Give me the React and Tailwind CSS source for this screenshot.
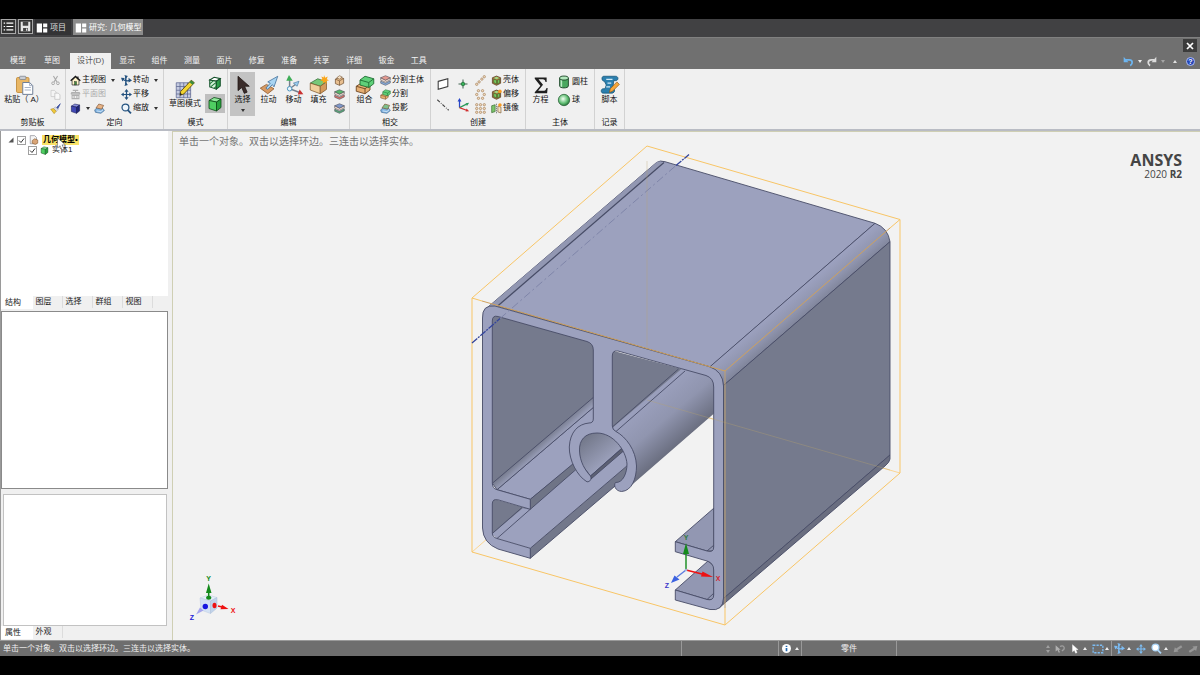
import React from "react";

// =====================================================
// Static data
// =====================================================
const leadTabs = ["模型", "草图"];
const ribbonTabs = ["显示", "组件", "测量", "面片", "修复", "准备", "共享", "详细", "钣金", "工具"];
const treeTabs = ["结构", "图层", "选择", "群组", "视图"];
const propTabs = ["属性", "外观"];

// =====================================================
// Icons (all on a 16 x 16 grid)
// =====================================================
function Svg({ className = "w-[11px] h-[11px]", children }) {
  return (
    <svg viewBox="0 0 16 16" className={`${className} shrink-0`} fill="none" aria-hidden="true">
      {children}
    </svg>
  );
}

function Caret({ up = false, className = "text-[#333]" }) {
  return (
    <svg viewBox="0 0 4 3" className={`w-1 h-[3px] shrink-0 ${className}`} aria-hidden="true">
      <path d={up ? "M0 3 2 0 4 3z" : "M0 0h4L2 3z"} fill="currentColor" />
    </svg>
  );
}

function Cube({ className, top = "#8ee89a", left = "#27a23c", right = "#4fce62", line = "#0c4a17" }) {
  return (
    <Svg className={className}>
      <g stroke={line} strokeWidth=".8" strokeLinejoin="round">
        <path d="M2 4.500 7 1.500 14 3 9.500 6z" fill={top} />
        <path d="M2 4.500 9.500 6v9L2 12.500z" fill={right} />
        <path d="M9.500 6 14 3v8.500L9.500 15z" fill={left} />
      </g>
    </Svg>
  );
}

function PasteIcon() {
  return (
    <Svg className="w-5 h-5">
      <rect x="2" y="2" width="10" height="12" rx="1" fill="#e9b765" stroke="#c08a3a" strokeWidth=".7" />
      <rect x="4.500" y="1" width="5" height="2.600" rx=".6" fill="#c9cdd4" stroke="#7b818c" strokeWidth=".6" />
      <path d="M7 6h5.500L15 8.500V15.500H7z" fill="#fff" stroke="#6f7f96" strokeWidth=".8" />
      <path d="M12.500 6v2.500H15M8.500 10h5M8.500 12h5" stroke="#9aa7bb" strokeWidth=".7" />
    </Svg>
  );
}

function ScissorsIcon() {
  return (
    <Svg>
      <path d="M5 1.500 10 10M11 1.500 6 10" stroke="#a8a8a8" strokeWidth="1.500" />
      <circle cx="4.500" cy="12" r="2" stroke="#a8a8a8" strokeWidth="1.400" />
      <circle cx="11.500" cy="12" r="2" stroke="#a8a8a8" strokeWidth="1.400" />
    </Svg>
  );
}

function CopyIcon() {
  return (
    <Svg>
      <path d="M1.500 2h5L9 4.500V11H1.500z" fill="#f4f4f4" stroke="#c4c4c4" />
      <path d="M7 6h5l2.500 2.500V15H7z" fill="#f8f8f8" stroke="#bcbcbc" />
    </Svg>
  );
}

function BrushIcon() {
  return (
    <Svg>
      <path d="M15 1 9 7l2 2z" fill="#3b4fa0" stroke="#3b4fa0" />
      <path d="M8 5.500 12 9.500 9 12 5 8z" fill="#d8dbe2" stroke="#8d93a0" strokeWidth=".6" />
      <path d="M5 8 9 12 6 15.500 1 9z" fill="#f0c93a" stroke="#a07b16" strokeWidth=".7" />
    </Svg>
  );
}

function HomeIcon() {
  return (
    <Svg>
      <path d="M3 8v6.500h10V8L8 3z" fill="#fff3c9" stroke="#222" />
      <path d="M1 8.500 8 2l7 6.500" stroke="#111" strokeWidth="1.900" />
      <rect x="6.500" y="9.500" width="3" height="5" fill="#3f8a3d" stroke="#222" strokeWidth=".6" />
      <path d="M11.500 2v3" stroke="#111" strokeWidth="1.700" />
    </Svg>
  );
}

function PlanViewIcon() {
  return (
    <Svg>
      <path d="M1 7h14M8 1v4M4 2h8M2.500 5h11v2.500h-11zM3 9.500h10V14H3zM6 9.500V14M10 9.500V14" stroke="#b0b0b0" strokeWidth="1.500" />
    </Svg>
  );
}

function StackIcon({ a = "#e7b487", b = "#7fb4e2" }) {
  return (
    <Svg>
      <path d="M1 10 5 6.500 13 8 15 11 10 15 2 13.500z" fill={b} stroke="#365d86" strokeWidth=".9" />
      <path d="M3 7 7 1.500 14 3.500 11 9z" fill={a} stroke="#7a4d2a" strokeWidth=".9" />
      <path d="M4 11.500 10 12.500 13.500 9.500" stroke="#fff" strokeWidth=".9" />
    </Svg>
  );
}

function SpinIcon({ color = "#24527f", className }) {
  return (
    <Svg className={className}>
      <path d="M7 3v10M2.500 6c3 3 8 3 10.500 1.500" stroke={color} strokeWidth="2" />
      <path d="M5 0 10 1.500 7 5.500zM5 16l5-1.500-3-4zM0 4l5.500.5L2 9.500zM16 8l-5-4v7z" fill={color} />
    </Svg>
  );
}

function PanIcon({ color = "#24527f", className }) {
  return (
    <Svg className={className}>
      <path d="M8 2v12M2 8h12" stroke={color} strokeWidth="1.800" />
      <path d="M8 0 11 4H5zM8 16l3-4H5zM0 8l4-3v6zM16 8l-4-3v6z" fill={color} />
    </Svg>
  );
}

function ZoomIcon({ color = "#24527f", fill = "#eef5fb", className }) {
  return (
    <Svg className={className}>
      <circle cx="6.500" cy="6.500" r="5" fill={fill} stroke={color} strokeWidth="1.800" />
      <path d="M10 10.500 14.500 15" stroke={color} strokeWidth="2.600" />
    </Svg>
  );
}

function SketchIcon() {
  return (
    <Svg className="w-5 h-5">
      <rect x="1" y="3" width="11.500" height="12" fill="#c4cae0" />
      <path d="M1 3v12h11.500V3zM4 3v12M7 3v12M10 3v12M1 6h11.500M1 9h11.500M1 12h11.500" stroke="#5c6690" strokeWidth=".6" />
      <path d="M13 1 15.500 3 7 12 4 13 4.500 10z" fill="#f3d531" stroke="#5e4c0b" strokeWidth=".7" />
      <path d="M13 1 15.500 3 14 4.600 11.500 2.600z" fill="#3c8b3f" />
      <path d="M4 13 4.300 11 5.800 12.300z" fill="#222" />
    </Svg>
  );
}

function SectionIcon() {
  return (
    <Svg className="w-[14px] h-[14px]">
      <path d="M2 4.500 7 1.500 14 3 9.500 6z" fill="#fff" stroke="#14502a" strokeWidth="1.200" />
      <path d="M2 4.500 9.500 6v9L2 12.500z" fill="#d4f2da" stroke="#14502a" strokeWidth="1.200" />
      <path d="M9.500 6 14 3v8.500L9.500 15z" fill="#2da04a" stroke="#14502a" strokeWidth="1.200" />
      <path d="M2 9 6 5.500M3 12.500 9 7.500M7 14l2.500-2" stroke="#1f7a38" strokeWidth="1.200" />
    </Svg>
  );
}

function ArrowCursor({ className = "w-5 h-5", fill = "#3a2c2a", line = "#1d1412" }) {
  return (
    <Svg className={className}>
      <path d="M4 1v11.500l3-2.500 2 4.700 2.300-1L9.300 9H13z" fill={fill} stroke={line} strokeWidth=".6" />
    </Svg>
  );
}

function PullIcon() {
  return (
    <Svg className="w-5 h-5">
      <path d="M1 10.500 6 7.500 12 11 7 15z" fill="#d79a63" stroke="#8a5426" strokeWidth=".6" />
      <path d="M15 1 7 5.500 9 6.500 5.500 10.500 7 11.500 10.700 7.700 12 9.500z" fill="#a8d4f2" stroke="#3c6b97" strokeWidth=".6" />
    </Svg>
  );
}

function MoveIcon() {
  return (
    <Svg className="w-5 h-5">
      <path d="M4.500 3v8l8 3M4.500 11 10 7" stroke="#76808e" strokeWidth="1.200" />
      <path d="M4 0 7 4.500 1.800 4.500z" fill="#3fae58" />
      <path d="M15.500 15.300 11 15.500l1.500-4z" fill="#c93030" />
      <path d="M12 5 10.500 9 7.500 6.500z" fill="#9ccdf0" stroke="#47759c" strokeWidth=".5" />
      <circle cx="4.500" cy="11" r="1.800" fill="#e8f4fb" stroke="#4b95bf" strokeWidth=".8" />
    </Svg>
  );
}

function FillIcon() {
  return (
    <Svg className="w-5 h-5">
      <path d="M1 6.500 7 3 14 5.500 9 9z" fill="#78c878" stroke="#2f6b33" strokeWidth=".6" />
      <path d="M1 6.500 9 9v6L1 12z" fill="#f1cf9c" stroke="#80592c" strokeWidth=".6" />
      <path d="M9 9 14 5.500V11.500L9 15z" fill="#d59a5b" stroke="#80592c" strokeWidth=".6" />
      <path d="M12 0l.9 2.200L15 1.200l-.8 2.100 1.800.9-2.100.6.5 2.200L12.500 5.500l-1.600 1.200.2-2-2.100-.4L10.700 3 9.800 1.200l2 .7z" fill="#f9a51a" />
    </Svg>
  );
}

function BlocksIcon({ className = "w-5 h-5" }) {
  return (
    <Svg className={className}>
      <path d="M1 9 5 6.500 12 8v4L8 15 1 13z" fill="#e5ae72" stroke="#6b431f" strokeWidth=".7" />
      <path d="M4 4 8 1l7 2v4l-4 3-7-2z" fill="#5fd079" stroke="#1b6a30" strokeWidth=".7" />
      <path d="M4 4 11 6 15 3M11 6v4" stroke="#1b6a30" strokeWidth=".7" />
      <path d="M1 9 8 11v4M8 11l2-1.500" stroke="#6b431f" strokeWidth=".7" />
    </Svg>
  );
}

function BrownBox({ face = "#e8bf90", accent = "#f6e3c9" }) {
  return (
    <Svg>
      <path d="M2 6 8 3 14 5v7L8 15 2 12.500z" fill={face} stroke="#6c4a2a" />
      <path d="M2 6 8 8.500 14 5M8 8.500V15" stroke="#6c4a2a" strokeWidth=".9" />
      <path d="M4 4 8 1l4 2-4 3z" fill={accent} stroke="#6c4a2a" strokeWidth=".8" />
    </Svg>
  );
}

function LayersIcon({ top, bottom }) {
  return (
    <Svg>
      <path d="M1 9v3l7 3 7-3.500v-3L8 12z" fill={bottom} stroke="#4a4a55" strokeWidth=".8" />
      <path d="M1 4v3.500L8 10.500 15 7V4L8 7.500z" fill="#f6ded0" stroke="#4a4a55" strokeWidth=".8" />
      <path d="M1 4 8 1l7 3-7 3.500z" fill={top} stroke="#4a4a55" strokeWidth=".8" />
    </Svg>
  );
}

function PlaneIcon() {
  return (
    <Svg className="w-[14px] h-[14px]">
      <path d="M2.500 5 13.500 2v9L2.500 14z" fill="#fff" stroke="#3c3c3c" strokeWidth="1.200" />
    </Svg>
  );
}

function AxisLineIcon() {
  return (
    <Svg className="w-[14px] h-[14px]">
      <path d="M1.500 2 14.500 14" stroke="#444" strokeWidth="1.200" strokeDasharray="4 1.500 1 1.500" />
    </Svg>
  );
}

function PointIcon() {
  return (
    <Svg className="w-3 h-3">
      <path d="M8 2v12M2 8h12" stroke="#3d5f4c" strokeWidth="1.300" />
      <circle cx="8" cy="8" r="2.400" fill="#37b45a" stroke="#1d6b34" />
    </Svg>
  );
}

function OriginIcon() {
  return (
    <Svg className="w-[14px] h-[14px]">
      <path d="M4 11V3" stroke="#2846c8" strokeWidth="1.400" />
      <path d="M4 0 6.200 4H1.800z" fill="#2846c8" />
      <path d="M4 11 12 7" stroke="#2a9a5a" strokeWidth="1.400" />
      <path d="M15 5.500 12.500 9 11 6z" fill="#2a9a5a" />
      <path d="M4 11 12 14" stroke="#d02f2f" strokeWidth="1.400" />
      <path d="M15 15 11 15.500 12 12z" fill="#d02f2f" />
    </Svg>
  );
}

function DotsIcon({ points }) {
  return (
    <Svg>
      {points.map(([cx, cy]) => (
        <circle key={`${cx}-${cy}`} cx={cx} cy={cy} r="1.700" fill="#f3dcc0" stroke="#a5825c" />
      ))}
    </Svg>
  );
}

const linearDots = [[2.5, 13.5], [6, 10], [10, 6], [13.5, 2.5]];
const circularDots = [[5, 2.5], [11, 2.5], [2.5, 8], [13.5, 8], [5, 13.5], [11, 13.5]];
const gridDots = [[2.5, 2.5], [8, 2.5], [13.5, 2.5], [2.5, 8], [8, 8], [13.5, 8], [2.5, 13.5], [8, 13.5], [13.5, 13.5]];

function ShellIcon({ spark }) {
  return (
    <Svg>
      <path d="M2 4 8 1.500 14 4v8L8 15 2 12z" fill="#a8743c" stroke="#4c3517" />
      <path d="M4 6 8 7.500V13L4 11zM9.500 7.500 12.500 6v5l-3 2z" fill="#77c760" stroke="#2c5a20" strokeWidth=".7" />
      <path d="M4 4.300 8 2.700 12 4.300 8 6z" fill="#9fdc86" />
      {spark && <circle cx="13" cy="3.500" r="2.600" fill="#f79a22" />}
    </Svg>
  );
}

function MirrorIcon() {
  return (
    <Svg>
      <path d="M1 4 6 2.500v10L1 14z" fill="#7cc76b" stroke="#3b6a32" />
      <path d="M8 1v14" stroke="#555" strokeDasharray="2 1" />
      <path d="M10 4.500 14.500 6v8.500L10 13z" fill="#f3e2c6" stroke="#81653f" />
      <circle cx="13" cy="3" r="2.600" fill="#f79a22" />
    </Svg>
  );
}

function SigmaIcon() {
  return (
    <Svg className="w-5 h-5">
      <path d="M3 2h9.500v3.500h-.9C11.400 4 10.800 3.300 9.500 3.300H6l3.600 4.500L5.700 12.600h4c1.500 0 2.300-.7 2.700-2.300h.9L12.900 14.500H3v-.8L7.500 8.500 3 3z" fill="#1f1f1f" />
    </Svg>
  );
}

function CylinderIcon() {
  return (
    <Svg className="w-[14px] h-[14px]">
      <path d="M3 3.500v9c0 3 10 3 10 0v-9" fill="#4aa860" stroke="#173f22" />
      <path d="M5 5v8.500" stroke="#bdecc6" strokeWidth="1.800" />
      <ellipse cx="8" cy="3.500" rx="5" ry="2.300" fill="#b3e8bd" stroke="#173f22" />
    </Svg>
  );
}

function SphereIcon() {
  return (
    <Svg className="w-[14px] h-[14px]">
      <defs>
        <radialGradient id="ball" cx=".42" cy=".4" r=".65">
          <stop offset="0" stopColor="#f4fff5" />
          <stop offset=".6" stopColor="#63bf75" />
          <stop offset="1" stopColor="#1d6b30" />
        </radialGradient>
      </defs>
      <circle cx="8" cy="8" r="6.500" fill="url(#ball)" stroke="#215a2f" strokeWidth=".8" />
    </Svg>
  );
}

function ScriptIcon() {
  return (
    <Svg className="w-5 h-5">
      <path d="M3 1h9.500c2.500 0 2.500 3.500 0 3.500H11l-.5 4.500 1 2.500c.8 2-1 3-2 3H2.500c-2 0-2-3.500 0-3.500H4L5 8 3.500 5C1 5 1 1 3 1z" fill="#2b7fae" stroke="#145478" strokeWidth=".6" />
      <path d="M5 3.500h5M6 6.500h3M5 9.500h3" stroke="#cfe8f5" strokeWidth="1" />
      <path d="M13.500 5.500 15.500 7.500 10 13 7.500 14 8.200 11z" fill="#f7a63a" stroke="#8c5312" strokeWidth=".5" />
    </Svg>
  );
}

// =====================================================
// Ribbon pieces
// =====================================================
function Group({ title, className, children }) {
  return (
    <section aria-label={title} className={`flex flex-col border-r border-[#d2d2d2] pt-[3px] ${className}`}>
      <div className="flex flex-1">{children}</div>
      <h2 className="h-[13px] text-center leading-[13px]">{title}</h2>
    </section>
  );
}

function BigButton({ icon, label, active, caret, className = "w-[25px]" }) {
  return (
    <button
      type="button"
      className={`flex flex-col items-center pt-[2px] whitespace-nowrap ${className} ${active ? "bg-[#c3c3c3]" : ""}`}
    >
      <span className="flex h-[21px] items-center">{icon}</span>
      <span className="leading-[10px]">{label}</span>
      {caret && <span className="flex h-[10px] items-center"><Caret /></span>}
    </button>
  );
}

function Row({ icon, label, caret, disabled, name }) {
  return (
    <button
      type="button"
      disabled={disabled}
      aria-label={label || name}
      className={`flex h-[14px] items-center gap-px whitespace-nowrap ${disabled ? "text-[#ababab]" : ""}`}
    >
      {icon}
      {label && <span>{label}</span>}
      {caret && <span className="ml-1"><Caret /></span>}
    </button>
  );
}

function Column({ className = "", children }) {
  return <div className={`flex flex-col pt-px ${className}`}>{children}</div>;
}

function Ribbon() {
  return (
    <div className="flex h-[60px] shrink-0 bg-[#f0f0f0] text-[8px] text-[#111]">
      <Group title="剪贴板" className="w-[66px]">
        <BigButton className="ml-[3px] w-[42px]" icon={<PasteIcon />} label="粘贴（ A）" />
        <Column className="ml-[5px]">
          <Row name="剪切" icon={<ScissorsIcon />} />
          <Row name="复制" icon={<CopyIcon />} />
          <Row name="格式刷" icon={<BrushIcon />} />
        </Column>
      </Group>

      <Group title="定向" className="w-[98px]">
        <Column className="w-[50px] pl-1">
          <Row icon={<HomeIcon />} label="主视图" caret />
          <Row icon={<PlanViewIcon />} label="平面图" disabled />
          <div className="flex gap-1">
            <Row name="视图" icon={<Cube className="w-[11px] h-[11px]" top="#8a90dc" left="#20267c" right="#4148b4" line="#14184e" />} caret />
            <Row name="投影视图" icon={<StackIcon />} />
          </div>
        </Column>
        <Column className="pl-[5px]">
          <Row icon={<SpinIcon />} label="转动" caret />
          <Row icon={<PanIcon />} label="平移" />
          <Row icon={<ZoomIcon />} label="缩放" caret />
        </Column>
      </Group>

      <Group title="模式" className="w-[64px]">
        <BigButton className="mt-1 ml-[3px] w-[36px]" icon={<SketchIcon />} label="草图模式" />
        <div className="ml-[2px] flex flex-col">
          <button type="button" aria-label="剖面模式" className="flex h-[22px] w-5 items-center justify-center">
            <SectionIcon />
          </button>
          <button type="button" aria-label="三维模式" className="flex h-[19px] w-5 items-center justify-center bg-[#bfbfbf]">
            <Cube className="w-4 h-4" />
          </button>
        </div>
      </Group>

      <Group title="编辑" className="w-[122px]">
        <BigButton className="ml-[2px] w-[25px]" icon={<ArrowCursor />} label="选择" active caret />
        <BigButton className="ml-px w-[25px]" icon={<PullIcon />} label="拉动" />
        <BigButton icon={<MoveIcon />} label="移动" />
        <BigButton icon={<FillIcon />} label="填充" />
        <Column className="ml-[3px]">
          <Row name="混合" icon={<BrownBox />} />
          <Row name="替换" icon={<LayersIcon top="#58b56a" bottom="#d9736a" />} />
          <Row name="调整面" icon={<LayersIcon top="#7f97c9" bottom="#5aa87a" />} />
        </Column>
      </Group>

      <Group title="相交" className="w-[81px]">
        <BigButton className="ml-[2px] w-[25px]" icon={<BlocksIcon />} label="组合" />
        <Column className="ml-[3px]">
          <Row icon={<LayersIcon top="#e49a90" bottom="#86aee0" />} label="分割主体" />
          <Row icon={<BlocksIcon className="w-[11px] h-[11px]" />} label="分割" />
          <Row icon={<StackIcon a="#7ec08c" />} label="投影" />
        </Column>
      </Group>

      <Group title="创建" className="w-[95px]">
        <div className="ml-[5px] flex flex-col gap-[7px] pt-[5px]">
          <button type="button" aria-label="平面"><PlaneIcon /></button>
          <button type="button" aria-label="轴"><AxisLineIcon /></button>
        </div>
        <div className="ml-[6px] flex flex-col items-center gap-[8px] pt-[6px]">
          <button type="button" aria-label="点"><PointIcon /></button>
          <button type="button" aria-label="原点"><OriginIcon /></button>
        </div>
        <Column className="ml-[5px]">
          <Row name="线性阵列" icon={<DotsIcon points={linearDots} />} />
          <Row name="圆形阵列" icon={<DotsIcon points={circularDots} />} />
          <Row name="填充阵列" icon={<DotsIcon points={gridDots} />} />
        </Column>
        <Column className="ml-[5px]">
          <Row icon={<ShellIcon />} label="壳体" />
          <Row icon={<ShellIcon spark />} label="偏移" />
          <Row icon={<MirrorIcon />} label="镜像" />
        </Column>
      </Group>

      <Group title="主体" className="w-[69px]">
        <BigButton className="ml-[2px] w-[25px]" icon={<SigmaIcon />} label="方程" />
        <div className="ml-1 flex flex-col gap-1 pt-[3px]">
          <Row icon={<CylinderIcon />} label="圆柱" />
          <Row icon={<SphereIcon />} label="球" />
        </div>
      </Group>

      <Group title="记录" className="w-[30px]">
        <BigButton className="ml-[2px] w-[25px]" icon={<ScriptIcon />} label="脚本" />
      </Group>
    </div>
  );
}

// =====================================================
// Title bars
// =====================================================
function LayoutGlyph() {
  return (
    <Svg className="w-3 h-3">
      <path d="M1 2h7v12H1zM9.500 2H15v5H9.500zM9.500 8.500H15V14H9.500z" fill="#fff" />
    </Svg>
  );
}

function WindowTabs() {
  return (
    <div className="flex h-[18px] shrink-0 items-start gap-[2px] bg-[#414143] pl-px text-[8px] text-[#dcdcdc]">
      <button type="button" aria-label="菜单" className="flex size-[15px] items-center justify-center border border-[#a8a8a8] bg-[#333]">
        <Svg>
          <path d="M1 3h2M1 8h2M1 13h2M5 3h10M5 8h10M5 13h10" stroke="#fff" strokeWidth="1.700" />
        </Svg>
      </button>
      <button type="button" aria-label="保存" className="flex size-[15px] items-center justify-center border border-[#a8a8a8] bg-[#333]">
        <Svg>
          <path d="M1 1h14v14H1z" fill="#e6e6e6" />
          <path d="M4 1h8v6H4zM4.500 10h7v5h-7z" fill="#444" />
          <path d="M9 11h1.500v3H9z" fill="#fff" />
        </Svg>
      </button>
      <button type="button" className="flex h-4 w-9 items-center gap-[2px] bg-[#333335] pt-px pl-px">
        <LayoutGlyph />
        项目
      </button>
      <button type="button" className="flex h-4 items-center gap-[2px] bg-[#8c8c8c] px-[2px] pt-px whitespace-nowrap text-white">
        <LayoutGlyph />
        研究: 几何模型
      </button>
    </div>
  );
}

function RibbonTabs() {
  return (
    <div className="flex h-[32px] shrink-0 justify-between border-t border-[#808080] bg-[#707070] text-[8px] text-[#f4f4f4]">
      <nav className="flex items-end pl-px">
        {leadTabs.map((tab) => (
          <button key={tab} type="button" className="h-4 w-[34px]">{tab}</button>
        ))}
        <button type="button" className="ml-px h-4 w-[41px] bg-[#f0f0f0] text-[#555]">设计(D)</button>
        <div className="grid w-[324px] grid-cols-10">
          {ribbonTabs.map((tab) => (
            <button key={tab} type="button" className="h-4">{tab}</button>
          ))}
        </div>
      </nav>
      <div className="flex flex-col items-end gap-[2px] pt-px pr-[3px]">
        <button type="button" aria-label="关闭" className="flex h-[13px] w-[14px] items-center justify-center bg-[#3c3c3c]">
          <Svg className="w-2 h-2">
            <path d="M2 2l12 12M14 2 2 14" stroke="#fff" strokeWidth="3.500" />
          </Svg>
        </button>
        <div className="flex h-[14px] items-center gap-1 pr-[2px]">
          <button type="button" aria-label="撤销">
            <Svg>
              <path d="M3 5.500h6c5.500 0 5.500 6 1.500 8.500" stroke="#6db5f0" strokeWidth="2.600" />
              <path d="M1 1v8h7z" fill="#6db5f0" />
            </Svg>
          </button>
          <Caret className="text-[#eee]" />
          <button type="button" aria-label="重做">
            <Svg>
              <path d="M12 5.500H8c-6 0-6 6-2 8.500" stroke="#dcdcdc" strokeWidth="2.600" />
              <path d="M15 1v8H8z" fill="#dcdcdc" />
            </Svg>
          </button>
          <Caret className="text-[#a5a5a5]" />
          <button type="button" aria-label="折叠功能区" className="ml-1"><Caret up className="text-[#e0e0e0]" /></button>
          <button type="button" aria-label="帮助" className="ml-[5px] flex size-[9px] items-center justify-center rounded-full border border-[#aebcf0] bg-[#2546b8] text-[7px] leading-none font-bold text-white">
            ?
          </button>
        </div>
      </div>
    </div>
  );
}

// =====================================================
// Left side
// =====================================================
function TickBox({ id }) {
  return (
    <span className="grid size-[9px] shrink-0">
      <input id={id} type="checkbox" defaultChecked className="peer col-start-1 row-start-1 size-[9px] appearance-none border border-[#a0a0a0] bg-white" />
      <svg viewBox="0 0 9 9" className="pointer-events-none invisible col-start-1 row-start-1 size-[9px] peer-checked:visible" fill="none" aria-hidden="true">
        <path d="M2 4.500 4 6.500 7 2.500" stroke="#333" />
      </svg>
    </span>
  );
}

function PanelTabs({ tabs }) {
  return (
    <div className="flex h-[14px] shrink-0 items-start text-[8px] text-[#222]">
      {tabs.map((tab, i) => (
        <button
          key={tab}
          type="button"
          className={i === 0 ? "h-[13px] w-8 bg-white pr-2 pt-px" : "h-3 w-[30px] border-r border-[#dcdcdc] pr-2"}
        >
          {tab}
        </button>
      ))}
    </div>
  );
}

function SidePanel() {
  return (
    <aside className="flex w-[172px] shrink-0 flex-col border-l border-[#9a9a9a] bg-[#f0f0f0]">
      <div className="relative mr-1 flex-[164] basis-0 bg-white pt-1 text-[8px] leading-[10px]">
        <div className="flex h-[10px] items-center gap-[3px] pl-[7px]">
          <svg viewBox="0 0 6 6" className="size-[6px]" aria-hidden="true"><path d="M5.500.5v5H.5z" fill="#555" /></svg>
          <TickBox id="node-root" />
          <Svg className="w-[10px] h-[10px]">
            <path d="M2 1h7l3 3v10H2z" fill="#f5f5f5" stroke="#7d7d86" />
            <path d="M5 9 9 6l5 2v5l-4 2-5-2z" fill="#d9a577" stroke="#73481f" strokeWidth=".8" />
          </Svg>
          <label htmlFor="node-root" className="bg-[#f8e268] px-px font-bold text-black">几何模型•</label>
        </div>
        <div className="flex h-[10px] items-center gap-[3px] pl-[27px]">
          <TickBox id="node-body" />
          <Cube className="w-[9px] h-[9px]" />
          <label htmlFor="node-body" className="text-[#222]">实体1</label>
        </div>
        <ArrowCursor className="absolute top-[6px] left-[53px] h-[14px] w-[14px]" fill="#fff" line="#555" />
      </div>
      <PanelTabs tabs={treeTabs} />
      <div className="mr-1 mt-px flex-[179] basis-0 border border-[#8a8a8a] bg-white" />
      <div className="mt-[5px] mr-[5px] ml-[2px] flex-[132] basis-0 border border-[#c2c2c2] bg-white" />
      <PanelTabs tabs={propTabs} />
    </aside>
  );
}

// =====================================================
// 3D view
// =====================================================
const profile =
  "M482.500 318Q482 304.500 495 306L709 366.500Q723 371 723.500 386V598Q723 611.500 710 609.500L675.300 600V590L707 599.500" +
  "Q713.700 601 713.700 595V570Q713.700 563 707 561L675.300 551.700V541.700L707 551Q713.700 553 713.700 547V387Q713.700 378 706 375.500" +
  "L618 351Q612.300 350 612.300 356V426Q612.500 430 616 431.500C626 437 636 450 636.500 466C636.500 478 632 491 621.500 491.500" +
  "C615 491 613.500 485 615.500 482.500C623 483 627 473 627 464C626 450 613 433 597 433C585 433 579 440 579.500 451" +
  "C580 462 585 470 590.500 476C592 479 590 482 587 481.800C577 476 569 460 569.300 447C570 432 578 424 589 423" +
  "Q593.300 423 593.300 419V350Q593.300 343.500 587 341.500L498 316.500Q492.300 315 492.300 321V483Q492.300 488.500 497 489.700" +
  "L530.300 499.300V509.300L498 499.800Q492.300 498.500 492.300 504V533Q492.300 537 497 538.500L530.300 548.300V558.300L498 549Q483 543 482.500 528Z";

function Model() {
  return (
    <svg viewBox="173 132 1027 508" className="h-full w-full" fill="none" role="img" aria-label="几何模型">
      <defs>
        <linearGradient id="fillet" gradientUnits="userSpaceOnUse" x1="792" y1="296" x2="809" y2="316">
          <stop offset="0" stopColor="#9ca1bf" />
          <stop offset=".5" stopColor="#9196b0" />
          <stop offset="1" stopColor="#7b8094" />
        </linearGradient>
        <linearGradient id="tube" gradientUnits="userSpaceOnUse" x1="650" y1="400" x2="685" y2="441">
          <stop offset="0" stopColor="#9a9fbc" />
          <stop offset=".45" stopColor="#9095af" />
          <stop offset="1" stopColor="#686c7d" />
        </linearGradient>
        <linearGradient id="bore" gradientUnits="userSpaceOnUse" x1="585" y1="438" x2="608" y2="466">
          <stop offset="0" stopColor="#74798b" />
          <stop offset="1" stopColor="#a0a5c1" />
        </linearGradient>
        <linearGradient id="cove" gradientUnits="userSpaceOnUse" x1="540" y1="441" x2="547" y2="449">
          <stop offset="0" stopColor="#74798b" />
          <stop offset="1" stopColor="#a0a5c1" />
        </linearGradient>
      </defs>

      {/* hidden edges of the bounding box */}
      <path d="M472 552 647 400 900 473" stroke="#fbd592" />

      {/* inner walls */}
      <path d="M490 314 595 343V400L492 486z" fill="#757a8d" />
      <path d="M610 350 716 378V388L612 470z" fill="#757a8d" />
      <path d="M490 498 532 510V515L492 536z" fill="#757a8d" />

      <g stroke="#474c66" strokeWidth=".9" strokeLinejoin="round">
        {/* lower left flange */}
        <path d="M492 534 530 502 590 460 627 440V466L530.300 548.300 497 538.500z" fill="#9ca1be" stroke="none" />
        <path d="M530.300 548.300 628 465V475L530.300 558.300z" fill="#73788b" />
        <path d="M490 498 532 510 522 508 492 533z" fill="#757a8d" stroke="none" />
        <path d="M492.300 533.500 522 507.500M497 538.500 530 509.500" />

        {/* upper left flange */}
        <path d="M497 489.700 595 406V447L530.300 499.300z" fill="#9ca1be" />
        <path d="M492.300 483.300 595 396V406L497 489.700z" fill="url(#cove)" />
        <path d="M530.300 499.300 580 458V466L530.300 509.300z" fill="#6f7486" />

        {/* inside of the round channel */}
        <path d="M579 432H612L622 448 590.500 476 578 460z" fill="url(#bore)" />
        <path d="M590.500 476 622 448.500 623.500 451 591 479z" fill="#5c6072" />

        {/* round channel going back */}
        <path d="M612.300 428 682 368.500 714 376V413.500L630 486.500 636 466 616 431.500z" fill="url(#tube)" stroke="none" />
        <path d="M612.300 427 678.500 369M616 431.500 685 371" />

        {/* right flanges */}
        <path d="M675.300 541.700 714 508V551L707 551z" fill="#9297b2" />
        <path d="M675.300 590 708 561 714 566V600L707 599.500z" fill="#9297b2" />
        <path d="M707 551 714 545M707 599.500 714 593" />

        {/* outer skin */}
        <path d="M488 307 656.500 162.500Q660 160 665 161.700L875 223.300 710 367 497.700 306z" fill="#9ca1be" />
        <path d="M488 307 656.500 162.500Q660 160 663 163.500L497.700 306z" fill="#9297b2" stroke="none" />
        <path d="M497.700 306 664 162.500" strokeWidth="1.200" />
        <path d="M710 366.700 875 223.300Q888 228 890 241.700L723.500 385.500Q721 371 710 366.700z" fill="url(#fillet)" />
        <path d="M723.500 385.500 890 241.700V455L723.500 598.500z" fill="#757a8d" />
        <path d="M723.500 598.500 890 455V459Q889.500 462.500 885 466L719 608z" fill="#6a6e80" />
      </g>

      <path d={profile} fill="#9ca1be" stroke="#474c66" strokeWidth=".9" strokeLinejoin="round" />

      {/* bounding box */}
      <path d="M482 301 472 298V552L725 625 900 473V219.500L647 146 472 298" stroke="#f8c566" />
      <path d="M890 228 900 219.500" stroke="#f8c566" />
      <path d="M482 301 725 371 890 228" stroke="#cfa15c" />
      <path d="M725 371V608" stroke="#bfa072" />
      <path d="M725 608V625" stroke="#f8c566" />
      <path d="M647 161V349M647 400 890 470" stroke="#b7a36c" strokeOpacity=".35" />

      {/* datum axis */}
      <path d="M472 343 500 318.500M676 165.500 689 154.500" stroke="#34459c" strokeWidth="1.300" strokeDasharray="7 1 2 1" />
      <path d="M500 318.500 676 165.500" stroke="#7f85a9" strokeDasharray="8 3 2 3" />

      {/* origin */}
      <g fontFamily="Liberation Sans, sans-serif" fontSize="7" fontWeight="bold" textAnchor="middle">
        <path d="M686 570V552" stroke="#138a1b" strokeWidth="1.400" />
        <path d="M686 543 689 554H683z" fill="#138a1b" />
        <text x="686" y="540" fill="#2f7a3d">Y</text>
        <path d="M686 570 704 574.500" stroke="#ee1111" strokeWidth="1.400" />
        <path d="M713 577 701 576.500 702.500 571.500z" fill="#ee1111" />
        <text x="718" y="581" fill="#d6252f">X</text>
        <path d="M686 570 677 577" stroke="#5c7ce0" strokeWidth="1.400" />
        <path d="M671 583 674.500 575.500 679.500 579.500z" fill="#3b62e0" />
        <text x="667" y="588" fill="#3a37c9">Z</text>
        <circle cx="686" cy="570" r="1.300" fill="#9fb2e0" />
      </g>

      {/* orientation triad */}
      <g fontFamily="Liberation Sans, sans-serif" fontSize="7" fontWeight="bold" textAnchor="middle">
        <path d="M200 598 208 595 217 597.500 210.500 601z" fill="#e6effa" stroke="#bccbe0" strokeWidth=".5" />
        <path d="M200 598 210.500 601V613.500L201 610z" fill="#d4e2f4" stroke="#bccbe0" strokeWidth=".5" />
        <path d="M210.500 601 217 597.500V608L210.500 613.500z" fill="#c1d3ea" stroke="#a9bcd6" strokeWidth=".5" />
        <path d="M208.700 597V592" stroke="#138a1b" strokeWidth="1.500" />
        <path d="M208.700 583.500 211.500 593H206z" fill="#138a1b" />
        <ellipse cx="208.700" cy="597.700" rx="2.700" ry="2" fill="#138a1b" />
        <text x="208.700" y="581" fill="#138a1b">Y</text>
        <path d="M218 606 222 607" stroke="#ee1111" strokeWidth="1.300" />
        <path d="M228.500 609 220.500 609.300 222 604.800z" fill="#ee1111" />
        <ellipse cx="214.500" cy="605.500" rx="2" ry="2.800" fill="#ee1111" />
        <text x="233" y="613" fill="#ee1111">X</text>
        <path d="M196 614.500 200 607.500 203.500 610.500z" fill="#a5a5ee" />
        <circle cx="205.300" cy="606.500" r="2.700" fill="#1717e0" />
        <text x="192" y="620" fill="#2020d8">Z</text>
      </g>
    </svg>
  );
}

function Viewport() {
  return (
    <main className="relative min-w-0 flex-1 border-t border-l border-[#cfcfb4] bg-[#f2f2f2]">
      <Model />
      <p className="absolute top-1 left-[6px] text-[10px] leading-[12px] text-[#757575]">
        单击一个对象。双击以选择环边。三连击以选择实体。
      </p>
      <div className="absolute top-5 right-[18px] text-right font-['Open_Sans','Noto_Sans',sans-serif] text-[#454545]">
        <div className="text-[16px] leading-[16px] font-bold">ANSYS</div>
        <div className="text-[10px] leading-[12px]">2020 <b>R2</b></div>
      </div>
    </main>
  );
}

// =====================================================
// Status bar
// =====================================================
function StatusBar() {
  return (
    <footer className="flex h-4 shrink-0 items-center border-t border-[#999] bg-[#6e6e6e] text-[8px] leading-[15px] text-[#f0f0f0]">
      <p className="min-w-0 flex-1 truncate pl-[3px]">单击一个对象。双击以选择环边。三连击以选择实体。</p>
      <div className="h-full w-[97px] border-l border-[#999]" />
      <button type="button" aria-label="消息" className="flex h-full w-[23px] items-center justify-center gap-1 border-l border-[#999]">
        <Svg className="w-[9px] h-[9px]">
          <circle cx="8" cy="8" r="8" fill="#fff" />
          <path d="M8 3v2.500M8 7v6" stroke="#2469b0" strokeWidth="3" />
        </Svg>
        <Caret up className="text-[#eee]" />
      </button>
      <div className="h-full w-[96px] border-x border-[#999] text-center">零件</div>
      <div className="flex h-full w-[303px] items-center justify-end gap-[2px] pr-[2px]">
        <div className="flex h-full items-center gap-[5px] border-r border-[#999] pr-[2px]">
          <button type="button" aria-label="上下选择" className="flex flex-col gap-[2px]">
            <Caret up className="text-[#a0a0a0]" />
            <Caret className="text-[#a0a0a0]" />
          </button>
          <button type="button" aria-label="恢复选择">
            <Svg className="w-[10px] h-[10px]">
              <path d="M1 2v10l3-2.500L6 14l2-1-2-4h3z" fill="#b0b0b0" />
              <path d="M8 4c5-3 8 1 6 5l-3 2" stroke="#a0a0a0" strokeWidth="2" />
            </Svg>
          </button>
          <button type="button" aria-label="选择" className="flex items-center gap-[3px]">
            <ArrowCursor className="w-[10px] h-[10px]" fill="#fff" line="#fff" />
            <Caret up className="text-[#eee]" />
          </button>
          <button type="button" aria-label="框选" className="flex items-center gap-px">
            <Svg className="w-3 h-3">
              <rect x="1.500" y="3" width="13" height="10" stroke="#7dbcf2" strokeWidth="1.700" strokeDasharray="3 1.500" />
            </Svg>
            <Caret up className="text-[#eee]" />
          </button>
        </div>
        <div className="flex items-center gap-[5px]">
          <button type="button" aria-label="转动" className="flex items-center gap-[2px]">
            <SpinIcon color="#7dbcf2" />
            <Caret up className="text-[#eee]" />
          </button>
          <button type="button" aria-label="平移"><PanIcon color="#7dbcf2" className="w-[10px] h-[10px]" /></button>
          <button type="button" aria-label="缩放" className="flex items-center gap-[2px]">
            <ZoomIcon color="#a9d4f7" fill="#fff" />
            <Caret up className="text-[#eee]" />
          </button>
          <button type="button" aria-label="上一视图">
            <Svg className="w-[10px] h-[10px]"><path d="M1 13 3 5l2 2 8-5 2 3-8 5 2 2z" fill="#979797" /></Svg>
          </button>
          <button type="button" aria-label="下一视图">
            <Svg className="w-[10px] h-[10px]"><path d="M15 3 13 11l-2-2-8 5-2-3 8-5-2-2z" fill="#979797" /></Svg>
          </button>
        </div>
      </div>
    </footer>
  );
}

// =====================================================
// Page
// =====================================================
export default function App() {
  return (
    <div className="flex h-screen flex-col bg-black py-[19px] font-['Liberation_Sans','Noto_Sans_CJK_SC',sans-serif]">
      <WindowTabs />
      <RibbonTabs />
      <Ribbon />
      <div className="flex min-h-0 flex-1 border-t-2 border-[#b9bcc4] bg-[#f0f0f0]">
        <SidePanel />
        <Viewport />
      </div>
      <StatusBar />
    </div>
  );
}
